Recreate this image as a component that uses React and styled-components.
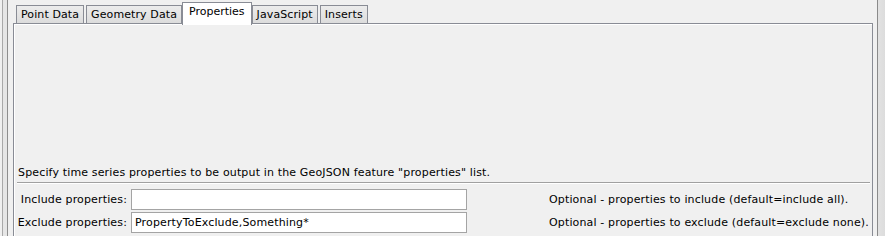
import React, { useState } from 'react';
import styled, { createGlobalStyle } from 'styled-components';

const GlobalStyle = createGlobalStyle`
  html, body {
    margin: 0;
    padding: 0;
    background: #f0f0f0;
  }
  body {
    font-family: "DejaVu Sans", "Liberation Sans", sans-serif;
    font-size: 11px;
    letter-spacing: 0.15px;
    color: #000;
  }
`;

const Window = styled.div`
  width: 885px;
  height: 236px;
  overflow: hidden;
  display: flex;
  background: #f0f0f0;
`;

const LeftRail = styled.div`
  flex: 0 0 auto;
  width: 4px;
  margin-left: 2px;
  margin-right: 5px;
  border-left: 1px solid #a9a9a9;
  border-right: 1px solid #8e8e8e;
  background: #e6e6e6;
`;

const RightRail = styled.div`
  flex: 0 0 auto;
  width: 7px;
  margin-left: 4px;
  border-left: 1px solid #8a8a8a;
  background: linear-gradient(to right, #e2e2e2, #dcdcdc);
`;

const TabPane = styled.div`
  flex: 1 1 auto;
  display: flex;
  flex-direction: column;
  min-width: 0;
`;

const TabStrip = styled.div`
  display: flex;
  align-items: flex-end;
  height: 24px;
  padding-left: 2px;
  position: relative;
  z-index: 1;
`;

const Tab = styled.div`
  box-sizing: border-box;
  height: ${(p) => (p.$active ? '23px' : '19px')};
  margin: ${(p) => (p.$active ? '0 -1px -1px -1px' : '0 1px 0 1px')};
  padding: ${(p) => (p.$active ? '1px 6px 0 6px' : '1px 4px 0 4px')};
  border: 1px solid #898c95;
  border-bottom: ${(p) => (p.$active ? 'none' : '1px solid #898c95')};
  background: ${(p) =>
    p.$active ? '#ffffff' : 'linear-gradient(to bottom, #ececec, #dcdcdc)'};
  line-height: 15px;
  letter-spacing: ${(p) => (p.$active ? '0' : '0.1px')};
  white-space: nowrap;
  cursor: default;
  position: relative;
  z-index: ${(p) => (p.$active ? 2 : 0)};
`;

const Panel = styled.div`
  flex: 1 1 auto;
  border: 1px solid #898c95;
  border-bottom: none;
  margin-top: -1px;
  background: #f0f0f0;
  box-shadow: inset 1px 1px 0 #ffffff;
  display: flex;
  flex-direction: column;
  padding: 0 2px 0 3px;
`;

const Blank = styled.div`
  height: 142px;
  flex: 0 0 auto;
`;

const Intro = styled.div`
  line-height: 14px;
  height: 14px;
  padding-left: 1px;
  white-space: nowrap;
`;

const Separator = styled.div`
  margin-top: 2px;
  height: 1px;
  background: #a0a0a0;
  border-bottom: 1px solid #ffffff;
`;

const Form = styled.div`
  margin-top: 5px;
  display: grid;
  grid-template-columns: 110px 336px auto;
  column-gap: 4px;
  row-gap: 2px;
  align-items: center;
`;

const Label = styled.label`
  text-align: right;
  white-space: nowrap;
`;

const Input = styled.input`
  box-sizing: border-box;
  height: 21px;
  width: 336px;
  margin: 0;
  padding: 0 3px;
  border: 1px solid #a4a4a4;
  background: #ffffff;
  font: inherit;
  letter-spacing: inherit;
  color: #000;
  outline: none;
`;

const Hint = styled.div`
  padding-left: 78px;
  white-space: nowrap;
`;

const tabs = ['Point Data', 'Geometry Data', 'Properties', 'JavaScript', 'Inserts'];

export default function App() {
  const [active, setActive] = useState('Properties');
  const [include, setInclude] = useState('');
  const [exclude, setExclude] = useState('PropertyToExclude,Something*');

  return (
    <>
      <GlobalStyle />
      <Window>
        <LeftRail />
        <TabPane>
          <TabStrip>
            {tabs.map((t) => (
              <Tab key={t} $active={t === active} onClick={() => setActive(t)}>
                {t}
              </Tab>
            ))}
          </TabStrip>
          <Panel>
            <Blank />
            <Intro>
              Specify time series properties to be output in the GeoJSON feature "properties" list.
            </Intro>
            <Separator />
            <Form>
              <Label>Include properties:</Label>
              <Input value={include} onChange={(e) => setInclude(e.target.value)} />
              <Hint>Optional - properties to include (default=include all).</Hint>
              <Label>Exclude properties:</Label>
              <Input value={exclude} onChange={(e) => setExclude(e.target.value)} />
              <Hint>Optional - properties to exclude (default=exclude none).</Hint>
            </Form>
          </Panel>
        </TabPane>
        <RightRail />
      </Window>
    </>
  );
}
